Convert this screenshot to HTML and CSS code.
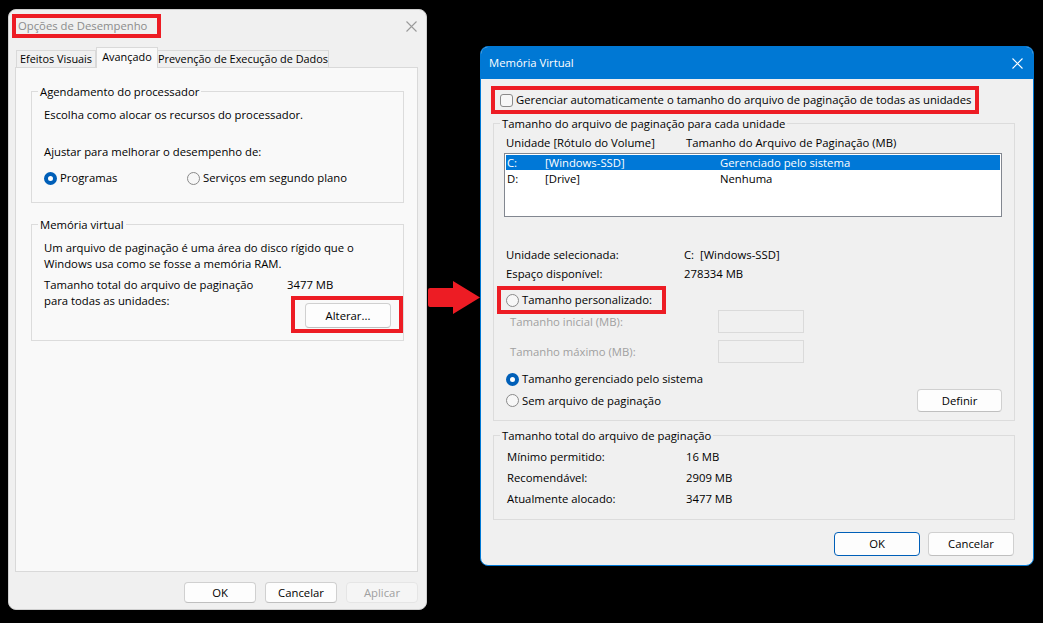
FILE: index.html
```html
<!DOCTYPE html>
<html lang="pt-BR">
<head>
  <meta charset="UTF-8" />
  <title>Opções de Desempenho - Memória Virtual</title>
  <link rel="stylesheet" href="styles.css">
</head>
<body>

  <!-- janela da esquerda: Opções de Desempenho (inativa) -->
  <div class="window perf">
    <div class="titlebar">
      <span class="mark title-mark">Opções de Desempenho</span>
      <span class="close">
        <svg width="11" height="11" viewBox="0 0 11 11"><path d="M0.5 0.5 L10.5 10.5 M10.5 0.5 L0.5 10.5" stroke="#9a9a9a" stroke-width="1.1" fill="none"/></svg>
      </span>
    </div>

    <div class="tabs">
      <span class="tab t1">Efeitos Visuais</span>
      <span class="tab t2 active">Avançado</span>
      <span class="tab t3">Prevenção de Execução de Dados</span>
    </div>

    <div class="panel">
      <div class="group cpu">
        <span class="legend">Agendamento do processador</span>
        <p class="line first">Escolha como alocar os recursos do processador.</p>
        <p class="line adjust">Ajustar para melhorar o desempenho de:</p>
        <div class="radio-row">
          <span class="radio prog"><span class="dot on"></span>Programas</span>
          <span class="radio"><span class="dot"></span>Serviços em segundo plano</span>
        </div>
      </div>

      <div class="group vm">
        <span class="legend">Memória virtual</span>
        <p class="line first">Um arquivo de paginação é uma área do disco rígido que o<br>Windows usa como se fosse a memória RAM.</p>
        <div class="total">
          <span class="total-label">Tamanho total do arquivo de paginação<br>para todas as unidades:</span>
          <div class="total-side">
            <span class="total-value">3477 MB</span>
            <span class="mark alter-mark"><button class="btn alter">Alterar...</button></span>
          </div>
        </div>
      </div>
    </div>

    <div class="actions">
      <button class="btn small">OK</button>
      <button class="btn small">Cancelar</button>
      <button class="btn small" disabled>Aplicar</button>
    </div>
  </div>

  <svg class="arrow" width="53" height="33" viewBox="0 0 53 33">
    <path d="M2 7 H25 V0 L52 16.5 L25 33 V26 H2 Q0 26 0 24 V9 Q0 7 2 7 Z" fill="#ed1c24"/>
  </svg>

  <!-- janela da direita: Memória Virtual (ativa) -->
  <div class="window vmem">
    <div class="titlebar blue">
      <span class="title">Memória Virtual</span>
      <span class="close">
        <svg width="11" height="11" viewBox="0 0 11 11"><path d="M0.5 0.5 L10.5 10.5 M10.5 0.5 L0.5 10.5" stroke="#ffffff" stroke-width="1.1" fill="none"/></svg>
      </span>
    </div>

    <div class="mark auto-mark">
      <span class="check"></span>Gerenciar automaticamente o tamanho do arquivo de paginação de todas as unidades
    </div>

    <div class="group drives">
      <span class="legend">Tamanho do arquivo de paginação para cada unidade</span>
      <div class="cols">
        <span class="col-a">Unidade [Rótulo do Volume]</span>
        <span>Tamanho do Arquivo de Paginação (MB)</span>
      </div>
      <div class="listbox">
        <div class="row selected"><span class="c-drive">C:</span><span class="c-label">[Windows-SSD]</span><span>Gerenciado pelo sistema</span></div>
        <div class="row"><span class="c-drive">D:</span><span class="c-label">[Drive]</span><span>Nenhuma</span></div>
      </div>

      <div class="info sel">
        <span class="info-label">Unidade selecionada:</span><span>C:&nbsp;&nbsp;[Windows-SSD]</span>
      </div>
      <div class="info">
        <span class="info-label">Espaço disponível:</span><span>278334 MB</span>
      </div>

      <div class="mark custom-mark">
        <span class="dot"></span>Tamanho personalizado:
      </div>
      <div class="field f1">
        <span class="field-label">Tamanho inicial (MB):</span><span class="input"></span>
      </div>
      <div class="field f2">
        <span class="field-label">Tamanho máximo (MB):</span><span class="input"></span>
      </div>

      <div class="radio managed"><span class="dot on"></span>Tamanho gerenciado pelo sistema</div>
      <div class="none-row">
        <span class="radio"><span class="dot"></span>Sem arquivo de paginação</span>
        <button class="btn define">Definir</button>
      </div>
    </div>

    <div class="group totals">
      <span class="legend">Tamanho total do arquivo de paginação</span>
      <div class="stat first"><span class="stat-label">Mínimo permitido:</span><span>16 MB</span></div>
      <div class="stat"><span class="stat-label">Recomendável:</span><span>2909 MB</span></div>
      <div class="stat"><span class="stat-label">Atualmente alocado:</span><span>3477 MB</span></div>
    </div>

    <div class="actions big">
      <button class="btn wide default">OK</button>
      <button class="btn wide">Cancelar</button>
    </div>
  </div>

</body>
</html>
```

FILE: styles.css
```css
* { box-sizing: border-box; }

html, body {
  margin: 0;
  padding: 0;
}

body {
  position: relative;
  width: 1043px;
  height: 623px;
  overflow: hidden;
  background: #000;
  color: #000;
  font-family: "Open Sans", "Noto Sans", sans-serif;
  font-size: 11.3px;
  line-height: 16px;
}

p { margin: 0; }

/* janelas */
.window {
  position: absolute;
  background: #f0f0f0;
  border-radius: 8px;
  overflow: hidden;
}

.perf {
  left: 8px; top: 9px;
  width: 419px; height: 601px;
  border: 1px solid #cfcfcf;
}

.vmem {
  left: 480px; top: 46px;
  width: 554px; height: 520px;
  border: 1px solid #0078d4;
}

.titlebar {
  display: flex;
  align-items: center;
  justify-content: space-between;
  height: 32px;
  padding-left: 3px;
}
.titlebar.blue {
  background: #0078d4;
  color: #fff;
  padding-left: 8px;
}
.close {
  display: flex;
  width: 11px; height: 11px;
  margin-right: 9px;
}
.blue .close { margin-right: 10px; }

/* marcações vermelhas */
.mark {
  border: 4px solid #ed1c24;
}
.title-mark {
  width: 149px;
  height: 24px;
  padding-left: 2px;
  color: #8c8c8c;
  line-height: 16px;
  white-space: nowrap;
}

/* abas */
.tabs {
  display: flex;
  align-items: flex-end;
  height: 25px;
  margin-left: 7px;
  position: relative;
  z-index: 1;
  font-size: 10.9px;
}
.tab {
  height: 17px;
  border: 1px solid #d9d9d9;
  border-bottom: none;
  background: #f0f0f0;
  text-align: center;
  line-height: 15px;
  white-space: nowrap;
}
.tab + .tab { border-left: none; }
.tab.active {
  height: 21px;
  margin-bottom: -1px;
  background: #f9f9f9;
  border-left: 1px solid #d9d9d9;
  line-height: 17px;
}
.tab.active + .tab { border-left: none; }
.t1 { width: 80px; }
.t2 { width: 62px; }
.t3 { width: 171px; }

.panel {
  height: 505px;
  margin: 0 8px 0 6px;
  background: #f9f9f9;
  border: 1px solid #d9d9d9;
  padding-top: 23px;
}

/* grupos */
.group {
  border: 1px solid #dcdcdc;
  padding-left: 12px;
}
.legend {
  display: block;
  width: max-content;
  margin: -8px 0 0 -6px;
  padding: 0 2px;
  background: #f9f9f9;
  white-space: nowrap;
}
.vmem .legend { background: #f0f0f0; }

.cpu {
  margin: 0 13px 0 15px;
  padding-bottom: 16px;
}
.cpu .first { margin-top: 7px; }
.cpu .adjust { margin-top: 21px; }
.radio-row {
  display: flex;
  margin-top: 10px;
}
.radio {
  display: flex;
  align-items: center;
  white-space: nowrap;
}
.radio .dot { margin-right: 3px; }
.prog { width: 143px; }

.dot {
  display: inline-block;
  flex: none;
  width: 13px; height: 13px;
  border: 1px solid #8a8a8a;
  border-radius: 50%;
  background: #f7f7f7;
}
.dot.on {
  border: 4px solid #005fb8;
  background: #fff;
}

.vm {
  margin: 21px 13px 0 15px;
  padding-bottom: 7px;
}
.vm .first { margin-top: 7px; }
.total {
  display: flex;
  margin-top: 5px;
}
.total-label {
  width: 243px;
  white-space: nowrap;
}
.total-side {
  flex: 1;
  display: flex;
  flex-direction: column;
  align-items: flex-end;
}
.total-value { align-self: flex-start; }
.alter-mark {
  display: block;
  width: 112px;
  height: 37px;
  margin-top: 3px;
  padding: 3px 0 0 10px;
}

/* botões */
.btn {
  display: block;
  padding: 0;
  background: #fdfdfd;
  border: 1px solid #d0d0d0;
  border-bottom-color: #bfbfbf;
  border-radius: 4px;
  font: inherit;
  color: #000;
  text-align: center;
}
.btn:disabled {
  color: #a0a0a0;
  background: #f5f5f5;
  border-color: #e5e5e5;
}
.alter { width: 86px; height: 25px; }
.small { width: 72px; height: 21px; }
.wide { width: 86px; height: 24px; }
.define { width: 85px; height: 23px; }
.default { border: 1px solid #005fb8; }

.actions {
  display: flex;
  justify-content: flex-end;
  gap: 9px;
  margin-top: 10px;
  padding-right: 8px;
}
.actions.big {
  gap: 8px;
  margin-top: 12px;
  padding-right: 19px;
}

.arrow {
  position: absolute;
  left: 428px;
  top: 281px;
}

/* Memória Virtual */
.auto-mark {
  display: flex;
  align-items: center;
  width: 488px;
  height: 28px;
  margin: 7px 0 0 10px;
  padding-left: 5px;
  white-space: nowrap;
}
.check {
  flex: none;
  width: 13px; height: 13px;
  margin-right: 3px;
  border: 1px solid #8a8a8a;
  border-radius: 3px;
  background: #f7f7f7;
}

.drives {
  margin: 9px 18px 0 12px;
  padding-right: 12px;
  padding-bottom: 8px;
}
.cols {
  display: flex;
  margin-top: 3px;
  white-space: nowrap;
}
.col-a { width: 180px; }

.listbox {
  height: 64px;
  margin: 2px 0 0 -2px;
  padding: 1px;
  background: #fff;
  border: 1px solid #828790;
}
.row {
  display: flex;
  height: 15px;
  padding-left: 1px;
  line-height: 15px;
  white-space: nowrap;
}
.row.selected {
  background: #0078d7;
  color: #fff;
}
.row + .row { margin-top: 1px; }
.c-drive { width: 38px; }
.c-label { width: 175px; }

.info {
  display: flex;
  margin-top: 3px;
  white-space: nowrap;
}
.info.sel { margin-top: 30px; }
.info-label { width: 178px; }

.custom-mark {
  display: flex;
  align-items: center;
  width: 169px;
  height: 28px;
  margin: 4px 0 0 -9px;
  padding-left: 5px;
  white-space: nowrap;
}
.custom-mark .dot { margin-right: 3px; }

.field {
  display: flex;
  align-items: center;
  padding-left: 4px;
  color: #a0a0a0;
  white-space: nowrap;
}
.f1 { margin-top: -4px; }
.f2 { margin-top: 7px; }
.field-label { width: 208px; }
.input {
  width: 86px;
  height: 23px;
  border: 1px solid #dadada;
  background: #f0f0f0;
}

.managed { margin-top: 8px; }
.none-row {
  display: flex;
  align-items: center;
  justify-content: space-between;
  margin-top: 2px;
}

.totals {
  margin: 14px 18px 0 12px;
  padding-bottom: 10px;
}
.stat {
  display: flex;
  line-height: 21px;
  padding-left: 1px;
}
.stat.first { margin-top: 2px; }
.stat-label { width: 179px; }
```
